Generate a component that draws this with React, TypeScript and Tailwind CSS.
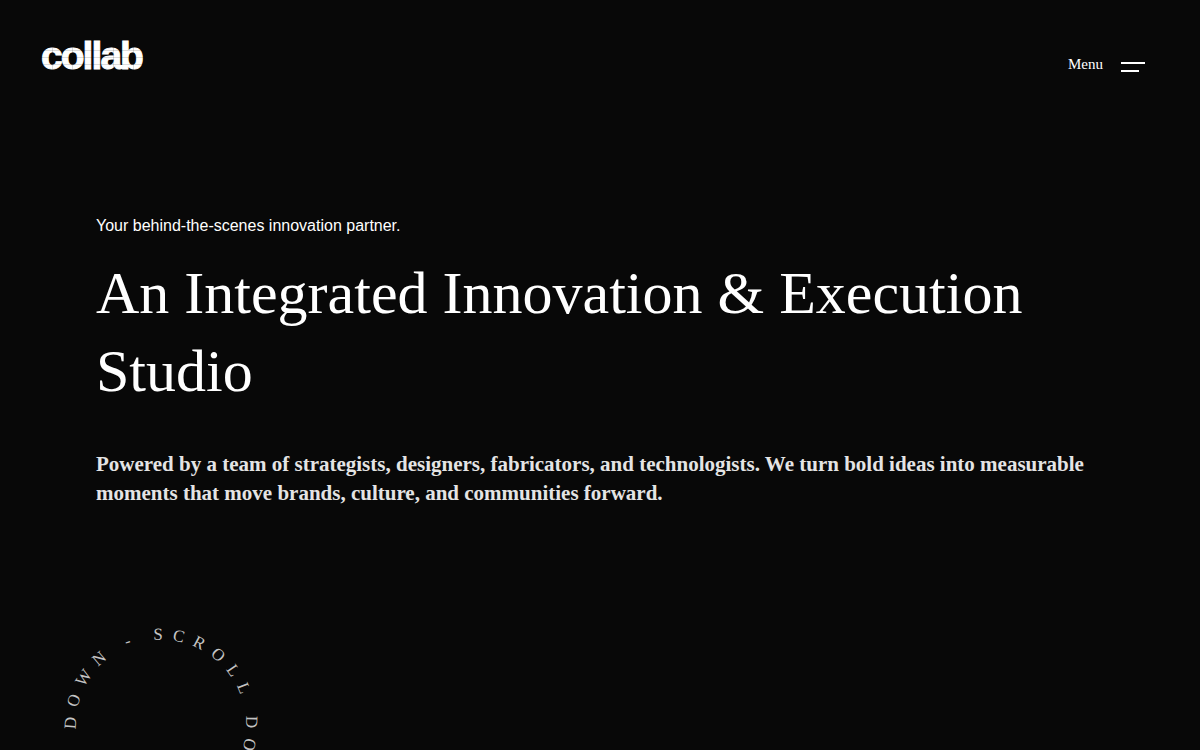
import React from 'react';

const RING_TEXT = 'SCROLL DOWN - SCROLL DOWN -';

const Logo: React.FC = () => (
  <a href="#home" aria-label="collab home" className="block">
    <svg className="w-[108px] h-9 block overflow-visible" viewBox="0 0 108 36">
      <text
        x="1"
        y="29"
        fill="#ffffff"
        stroke="#ffffff"
        strokeWidth="1"
        className="font-['Liberation_Sans',sans-serif] text-[39px] font-bold tracking-tighter"
      >
        collab
      </text>
      {/* Hairline grid over the wordmark */}
      <g stroke="#080808" strokeOpacity="0.14" strokeWidth="1">
        <path d="M0 10.5H104M0 17.5H104M0 24.5H104" />
        <path d="M12.5 0V32M32.5 0V32M73.5 0V32M93.5 0V32" />
      </g>
    </svg>
  </a>
);

const MenuButton: React.FC = () => (
  <button type="button" className="flex items-center gap-[18px] text-[15px] leading-5 text-white">
    <span>Menu</span>
    <span className="flex flex-col gap-[6px] pt-[6px]">
      <span className="block w-6 h-[2px] bg-white" />
      <span className="block w-[18px] h-[2px] bg-white" />
    </span>
  </button>
);

const ScrollRing: React.FC = () => (
  <a href="#work" aria-label="Scroll down" className="block w-[200px]">
    <svg className="w-[200px] h-[200px] block overflow-visible" viewBox="0 0 200 200">
      <defs>
        {/* Starts at the bottom and runs clockwise */}
        <path
          id="ring"
          d="M100 185a85 85 0 0 1 0 -170a85 85 0 0 1 0 170"
          transform="rotate(-2 100 100)"
        />
      </defs>
      <text fill="#c4c4c4" className="font-['Liberation_Serif',serif] text-[17px] tracking-[9px]">
        <textPath href="#ring">{RING_TEXT}</textPath>
      </text>
    </svg>
  </a>
);

const App: React.FC = () => {
  return (
    <div className="h-screen overflow-hidden bg-[#080808] text-white font-['Liberation_Serif',serif]">
      {/* Header */}
      <header className="flex items-start justify-between pt-10 pl-10 pr-[55px]">
        <Logo />
        <div className="pt-[14px]">
          <MenuButton />
        </div>
      </header>

      {/* Hero */}
      <main className="px-24 pt-[138px]">
        <p className="font-['Liberation_Sans',sans-serif] text-base leading-6">
          Your behind-the-scenes innovation partner.
        </p>
        <h1 className="mt-4 text-[60px] leading-[78px]">
          An Integrated Innovation &amp; Execution Studio
        </h1>
        <p className="mt-10 text-[21px] leading-[29px] font-bold text-[#e4e4e4]">
          Powered by a team of strategists, designers, fabricators, and technologists. We turn bold
          ideas into measurable moments that move brands, culture, and communities forward.
        </p>
      </main>

      <div className="pl-[61px] pt-[117px]">
        <ScrollRing />
      </div>
    </div>
  );
};

export default App;
